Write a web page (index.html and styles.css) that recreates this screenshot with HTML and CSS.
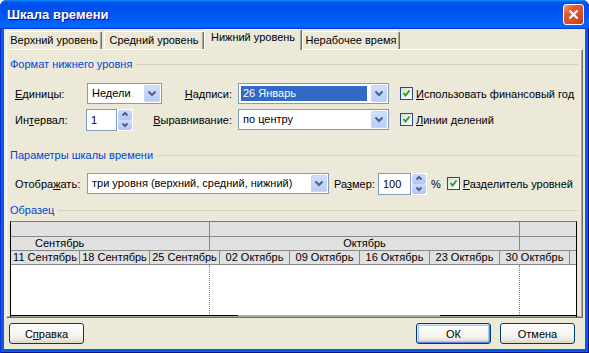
FILE: index.html
```html
<!DOCTYPE html>
<html lang="ru">
<head>
  <meta charset="UTF-8" />
  <meta name="viewport" content="width=device-width, initial-scale=1.0"/>
  <title>Шкала времени</title>
  <link rel="stylesheet" href="styles.css">
</head>
<body>
  <div class="window">
    <div class="titlebar">
      <span class="title">Шкала времени</span>
      <span class="close-btn">
        <svg width="13" height="13" viewBox="0 0 13 13"><path d="M2.5 2.5 L10.5 10.5 M10.5 2.5 L2.5 10.5"/></svg>
      </span>
    </div>

    <div class="client">
      <div class="tabs">
        <div class="tab tab-1">Верхний уровень</div>
        <div class="tab tab-2">Средний уровень</div>
        <div class="tab tab-3 active">Нижний уровень</div>
        <div class="tab tab-4">Нерабочее время</div>
      </div>

      <div class="panel">
        <div class="group-title first"><span>Формат нижнего уровня</span></div>

        <div class="format-grid">
          <label class="lbl"><u>Е</u>диницы:</label>
          <div class="combo">
            <span class="combo-text">Недели</span>
            <span class="drop-btn"><svg width="16" height="17" viewBox="0 0 16 17"><path d="M4.5 6.5 L8 10 L11.5 6.5"/></svg></span>
          </div>
          <label class="lbl right"><span><u>Н</u>адписи:</span></label>
          <div class="combo">
            <span class="combo-text selected">26 Январь</span>
            <span class="drop-btn"><svg width="16" height="17" viewBox="0 0 16 17"><path d="M4.5 6.5 L8 10 L11.5 6.5"/></svg></span>
          </div>
          <div class="check-row">
            <span class="checkbox"><svg width="11" height="11" viewBox="0 0 11 11"><path d="M2.5 5 L4.5 7.5 L8.5 2.5"/></svg></span>
            <span><u>И</u>спользовать финансовый год</span>
          </div>

          <label class="lbl">Ин<u>т</u>ервал:</label>
          <div class="spinner">
            <span class="spin-input">1</span>
            <span class="spin">
              <span class="spin-half"><svg width="14" height="9" viewBox="0 0 14 9"><path d="M4.5 5.5 L7 3 L9.5 5.5"/></svg></span>
              <span class="spin-half"><svg width="14" height="9" viewBox="0 0 14 9"><path d="M4.5 3.5 L7 6 L9.5 3.5"/></svg></span>
            </span>
          </div>
          <label class="lbl right"><span><u>В</u>ыравнивание:</span></label>
          <div class="combo">
            <span class="combo-text">по центру</span>
            <span class="drop-btn"><svg width="16" height="17" viewBox="0 0 16 17"><path d="M4.5 6.5 L8 10 L11.5 6.5"/></svg></span>
          </div>
          <div class="check-row">
            <span class="checkbox"><svg width="11" height="11" viewBox="0 0 11 11"><path d="M2.5 5 L4.5 7.5 L8.5 2.5"/></svg></span>
            <span><u>Л</u>инии делений</span>
          </div>
        </div>

        <div class="group-title"><span>Параметры шкалы времени</span></div>

        <div class="display-row">
          <label class="lbl">Отобра<u>ж</u>ать:</label>
          <div class="combo combo-wide">
            <span class="combo-text">три уровня (верхний, средний, нижний)</span>
            <span class="drop-btn"><svg width="16" height="17" viewBox="0 0 16 17"><path d="M4.5 6.5 L8 10 L11.5 6.5"/></svg></span>
          </div>
          <label class="size-lbl">Ра<u>з</u>мер:</label>
          <div class="spinner">
            <span class="spin-input wide">100</span>
            <span class="spin">
              <span class="spin-half"><svg width="14" height="9" viewBox="0 0 14 9"><path d="M4.5 5.5 L7 3 L9.5 5.5"/></svg></span>
              <span class="spin-half"><svg width="14" height="9" viewBox="0 0 14 9"><path d="M4.5 3.5 L7 6 L9.5 3.5"/></svg></span>
            </span>
          </div>
          <span class="percent">%</span>
          <div class="check-row tight">
            <span class="checkbox"><svg width="11" height="11" viewBox="0 0 11 11"><path d="M2.5 5 L4.5 7.5 L8.5 2.5"/></svg></span>
            <span><u>Р</u>азделитель уровней</span>
          </div>
        </div>

        <div class="group-title"><span>Образец</span></div>

        <div class="sample">
          <div class="tier tier-1">
            <div class="cell c-sep"></div>
            <div class="cell c-oct"></div>
            <div class="cell c-rest"></div>
          </div>
          <div class="tier tier-2">
            <div class="cell c-sep month-sep">Сентябрь</div>
            <div class="cell c-oct month">Октябрь</div>
            <div class="cell c-rest"></div>
          </div>
          <div class="tier tier-3">
            <div class="cell wk wk-first">11 Сентябрь</div>
            <div class="cell wk">18 Сентябрь</div>
            <div class="cell wk">25 Сентябрь</div>
            <div class="cell wk">02 Октябрь</div>
            <div class="cell wk">09 Октябрь</div>
            <div class="cell wk">16 Октябрь</div>
            <div class="cell wk">23 Октябрь</div>
            <div class="cell wk">30 Октябрь</div>
            <div class="cell c-rest"></div>
          </div>
          <div class="sample-body">
            <div class="grid-col c-sep"></div>
            <div class="grid-col c-oct"></div>
          </div>
          <div class="sample-bottom"></div>
        </div>
      </div>

      <div class="footer">
        <button class="btn">С<u>п</u>равка</button>
        <span class="spacer"></span>
        <button class="btn default">ОК</button>
        <button class="btn">Отмена</button>
      </div>
    </div>
  </div>
</body>
</html>
```

FILE: styles.css
```css
* {
  box-sizing: border-box;
}

body {
  margin: 0;
  background: #fff;
  font-family: "Liberation Sans", Arial, sans-serif;
  font-size: 11px;
  color: #000;
}

u {
  text-underline-offset: 1px;
}

/* window frame */
.window {
  width: 589px;
  height: 353px;
  padding: 0 4px 4px;
  display: flex;
  flex-direction: column;
  background: #0A5AE6;
  border-radius: 7px 7px 0 0;
  box-shadow: inset 1px 0 #0831D9, inset -1px 0 #00138C, inset 0 -1px #00138C;
}

.titlebar {
  height: 29px;
  margin: 0 -4px;
  padding: 0 5px 1px 7px;
  display: flex;
  align-items: center;
  border-radius: 7px 7px 0 0;
  background: linear-gradient(180deg, #0997ff, #0053ee 8%, #0050ee 40%, #0066ff 88%, #0066ff 93%, #005bff 95%, #003dd7 96%, #003dd7);
}

.title {
  color: #fff;
  font-weight: bold;
  font-size: 13px;
  text-shadow: 1px 1px #0F1089;
}

.close-btn {
  margin-left: auto;
  width: 21px;
  height: 21px;
  display: flex;
  align-items: center;
  justify-content: center;
  border: 1px solid #fff;
  border-radius: 3px;
  background: linear-gradient(135deg, #F3A184 0%, #E55B31 30%, #D84A22 70%, #C23A17 100%);
}

.close-btn path {
  stroke: #fff;
  stroke-width: 2.2;
  fill: none;
}

.client {
  height: 320px;
  display: flex;
  flex-direction: column;
  background: #ECE9D8;
}

/* tabs */
.tabs {
  height: 20px;
  padding-left: 2px;
  display: flex;
  align-items: flex-end;
  position: relative;
  z-index: 1;
}

.tab {
  height: 18px;
  line-height: 16px;
  text-align: center;
  white-space: nowrap;
  border-top: 1px solid #fff;
  border-left: 1px solid #fff;
  border-right: 1px solid #716F64;
  border-radius: 2px 2px 0 0;
  box-shadow: inset -1px 0 #ACA899;
  background: #ECE9D8;
}

.tab-1 { width: 96px; margin-right: 2px; }
.tab-2 { width: 100px; }
.tab-3 { width: 98px; }
.tab-4 { width: 98px; }

.tab.active {
  height: 21px;
  margin-bottom: -1px;
  line-height: 15px;
}

.panel {
  height: 269px;
  margin: 0 2px;
  border: 1px solid;
  border-color: #fff #716F64 #716F64 #fff;
  box-shadow: inset -1px -1px #ACA899;
  display: flex;
  flex-direction: column;
}

.group-title {
  height: 13px;
  padding: 0 4px 0 3px;
  display: flex;
  align-items: center;
  color: #0046D5;
  white-space: nowrap;
}

.group-title::after {
  content: "";
  flex: 1;
  height: 1px;
  margin-left: 4px;
  margin-top: 1px;
  background: #D0D0BF;
}

.group-title.first { margin-top: 7px; }
.format-grid + .group-title { margin-top: 18px; }
.display-row + .group-title { margin-top: 9px; }

/* first group */
.format-grid {
  margin-top: 13px;
  padding-left: 8px;
  display: grid;
  grid-template-columns: 72px 75px 76px 151px auto;
  grid-auto-rows: 21px;
  row-gap: 5px;
  align-items: center;
}

.lbl {
  white-space: nowrap;
}

.lbl.right {
  display: flex;
  justify-content: flex-end;
  padding-right: 6px;
}

.combo {
  height: 21px;
  display: flex;
  border: 1px solid #7F9DB9;
  background: #fff;
}

.combo-text {
  flex: 1;
  padding-left: 4px;
  line-height: 19px;
  white-space: nowrap;
  overflow: hidden;
}

.combo-text.selected {
  margin: 2px 3px 2px 2px;
  padding-left: 2px;
  line-height: 15px;
  background: #316AC5;
  color: #fff;
}

.drop-btn {
  width: 16px;
  height: 17px;
  margin: 1px;
  border-radius: 2px;
  background: linear-gradient(180deg, #D3E0FD, #B7CBF7);
  box-shadow: inset 0 0 0 1px #C8D7F8;
}

.drop-btn svg {
  display: block;
}

.drop-btn path,
.spin-half path {
  fill: none;
  stroke: #4D6185;
  stroke-width: 2;
}

.spinner {
  display: flex;
  margin-left: -1px;
}

.spin-input {
  width: 31px;
  height: 22px;
  padding-left: 4px;
  line-height: 20px;
  border: 1px solid #7F9DB9;
  background: #fff;
}

.spin-input.wide {
  width: 33px;
}

.spin {
  width: 16px;
  height: 22px;
  display: flex;
  flex-direction: column;
  border: 1px solid #fff;
  background: #fff;
}

.spin-half {
  flex: 1;
  display: flex;
  align-items: center;
  justify-content: center;
  border-radius: 2px;
  background: linear-gradient(180deg, #CBD9FC, #B3C6F4);
}

.spin-half svg {
  display: block;
}

.check-row {
  margin-left: 11px;
  display: flex;
  align-items: center;
  gap: 3px;
  white-space: nowrap;
}

.check-row.tight {
  margin-left: 6px;
}

.checkbox {
  width: 13px;
  height: 13px;
  border: 1px solid #1C5180;
  background: linear-gradient(135deg, #DCDCD7, #fff);
}

.checkbox svg {
  display: block;
}

.checkbox path {
  fill: none;
  stroke: #21A121;
  stroke-width: 1.8;
}

/* second group */
.display-row {
  height: 21px;
  margin-top: 12px;
  padding-left: 8px;
  display: flex;
  align-items: center;
}

.display-row .lbl {
  width: 72px;
}

.combo-wide {
  width: 242px;
}

.size-lbl {
  width: 44px;
  margin-left: 5px;
  white-space: nowrap;
}

.display-row .spinner {
  margin-left: 0;
}

.percent {
  margin-left: 4px;
}

/* sample */
.sample {
  margin: 5px 5px 0 3px;
  height: 96px;
  border-top: 1px solid #7A7A7A;
  border-left: 1px solid #000;
  border-right: 1px solid #000;
  font-family: "Liberation Sans", Arial, sans-serif;
  font-size: 11px;
}

.tier {
  display: flex;
  background: #E1E1E1;
  border-bottom: 1px solid #888;
}

.tier-1 { height: 15px; }
.tier-2 { height: 14px; line-height: 13px; }
.tier-3 { height: 14px; line-height: 13px; }

.cell {
  border-right: 1px solid #888;
  white-space: nowrap;
  overflow: hidden;
}

.c-sep { width: 199px; }
.c-oct { width: 310px; }
.c-rest { flex: 1; border-right: none; }

.month-sep { padding-left: 24px; }
.month { text-align: center; }

.wk {
  width: 70px;
  text-align: center;
}

.wk-first { width: 69px; }

.sample-body {
  height: 50px;
  display: flex;
  background: #fff;
}

.grid-col {
  border-right: 1px dotted #808080;
}

.sample-bottom {
  height: 1px;
  background: linear-gradient(90deg, #000 227px, #9DB1D8 227px, #9DB1D8 429px, #000 429px);
}

/* footer */
.footer {
  height: 31px;
  padding: 5px 10px 0 5px;
  display: flex;
  align-items: flex-start;
}

.spacer {
  flex: 1;
}

.btn {
  width: 75px;
  height: 21px;
  padding: 0;
  font-family: "Liberation Sans", Arial, sans-serif;
  font-size: 11px;
  color: #000;
  border: 1px solid #003C74;
  border-radius: 3px;
  background: linear-gradient(180deg, #FFFFFF, #F3F2EC 70%, #D9D5C8);
}

.btn.default {
  margin-right: 9px;
  box-shadow: inset 1px 1px 0 #CEE7FF, inset -1px -1px 0 #6982EE, inset 0 0 0 2px #A9C4F5;
}
```
